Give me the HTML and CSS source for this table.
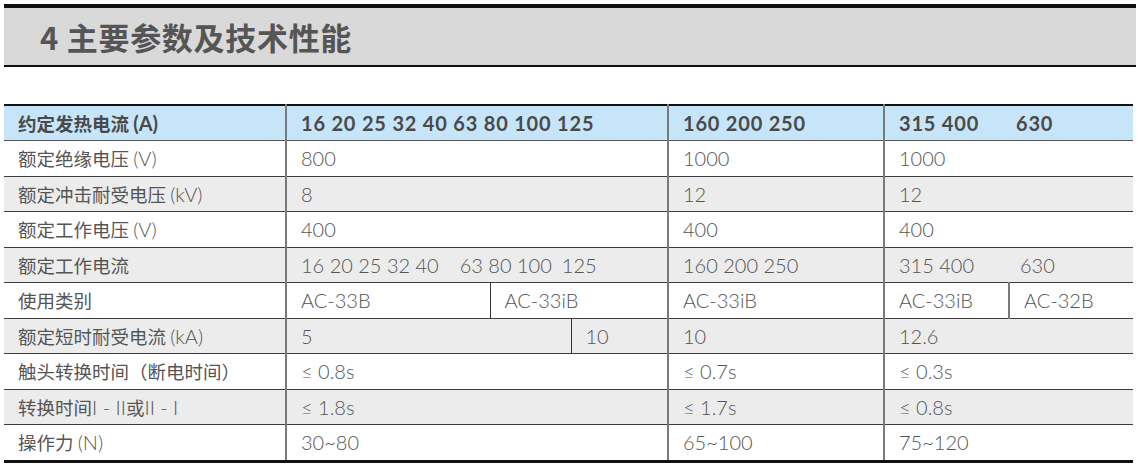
FILE: index.html
```html
<!DOCTYPE html>
<html lang="zh">
<head>
<meta charset="utf-8">
<link rel="stylesheet" href="styles.css">
</head>
<body>
<div class="page">
  <div class="title-bar"><h1 class="title">4 主要参数及技术性能</h1></div>
  <table class="spec">
    <colgroup>
      <col class="c-label"><col class="c-a"><col class="c-b"><col class="c-c"><col class="c-d"><col class="c-e"><col class="c-f">
    </colgroup>
    <thead>
      <tr class="head">
        <th class="label">约定发热电流 <span class="lat">(A)</span></th>
        <th colspan="3" class="main">16 20 25 32 40 63 80 100 125</th>
        <th class="main">160 200 250</th>
        <th class="main">315 400</th>
        <th class="sub-n">630</th>
      </tr>
    </thead>
    <tbody>
      <tr class="w">
        <td class="label">额定绝缘电压 <span class="lat">(V)</span></td>
        <td colspan="3" class="main">800</td>
        <td class="main">1000</td>
        <td colspan="2" class="main">1000</td>
      </tr>
      <tr class="g">
        <td class="label">额定冲击耐受电压 <span class="lat">(kV)</span></td>
        <td colspan="3" class="main">8</td>
        <td class="main">12</td>
        <td colspan="2" class="main">12</td>
      </tr>
      <tr class="w">
        <td class="label">额定工作电压 <span class="lat">(V)</span></td>
        <td colspan="3" class="main">400</td>
        <td class="main">400</td>
        <td colspan="2" class="main">400</td>
      </tr>
      <tr class="g">
        <td class="label">额定工作电流</td>
        <td colspan="3" class="main"><span class="grp">16 20 25 32 40</span><span class="grp gap-a">63 80 100</span><span class="grp gap-b">125</span></td>
        <td class="main">160 200 250</td>
        <td class="main">315 400</td>
        <td class="sub-n">630</td>
      </tr>
      <tr class="w">
        <td class="label">使用类别</td>
        <td class="main">AC-33B</td>
        <td colspan="2" class="split">AC-33iB</td>
        <td class="main">AC-33iB</td>
        <td class="main">AC-33iB</td>
        <td class="split-g">AC-32B</td>
      </tr>
      <tr class="g">
        <td class="label">额定短时耐受电流 <span class="lat">(kA)</span></td>
        <td colspan="2" class="main">5</td>
        <td class="split">10</td>
        <td class="main">10</td>
        <td colspan="2" class="main">12.6</td>
      </tr>
      <tr class="w">
        <td class="label">触头转换时间（断电时间）</td>
        <td colspan="3" class="main">≤ 0.8s</td>
        <td class="main">≤ 0.7s</td>
        <td colspan="2" class="main">≤ 0.3s</td>
      </tr>
      <tr class="g">
        <td class="label">转换时间<span class="lat">I - II</span>或<span class="lat">II - I</span></td>
        <td colspan="3" class="main">≤ 1.8s</td>
        <td class="main">≤ 1.7s</td>
        <td colspan="2" class="main">≤ 0.8s</td>
      </tr>
      <tr class="w last">
        <td class="label">操作力 <span class="lat">(N)</span></td>
        <td colspan="3" class="main">30~80</td>
        <td class="main">65~100</td>
        <td colspan="2" class="main">75~120</td>
      </tr>
    </tbody>
  </table>
</div>
</body>
</html>
```

FILE: styles.css
```css
html, body {
  margin: 0;
  padding: 0;
  background: #ffffff;
}

.page {
  padding: 4px 1px 0 4px;
  font-family: "Lato", "Noto Sans CJK SC", sans-serif;
}

.title-bar {
  background: #d9d9d9;
  border-top: 4px solid #111111;
  border-bottom: 2px solid #111111;
  height: 57px;
  display: flex;
  align-items: center;
  padding-left: 36px;
}

.title {
  margin: 0;
  font-family: "Noto Sans CJK SC", sans-serif;
  font-weight: 700;
  font-size: 31px;
  color: #555555;
  letter-spacing: 0.7px;
}

.spec {
  margin-top: 37px;
  width: 1129px;
  border-collapse: collapse;
  table-layout: fixed;
  border-top: 2px solid #111111;
  border-bottom: 3px solid #111111;
  font-size: 20px;
  color: #555555;
}

.c-label { width: 282px; }
.c-a { width: 204px; }
.c-b { width: 81px; }
.c-c { width: 97px; }
.c-d { width: 216px; }
.c-e { width: 125px; }
.c-f { width: 124px; }

.spec th,
.spec td {
  padding: 0 0 0 14px;
  text-align: left;
  white-space: nowrap;
  height: 34.5px;
  border-bottom: 1px solid #3c3c3c;
  font-weight: 300;
}

.spec .head th {
  background: #c6e5f8;
  font-weight: 700;
  color: #4a4a4a;
  height: 34px;
  border-bottom: 1px solid #555555;
  letter-spacing: 0.8px;
}

.spec .g td { background: #ececec; }
.spec .w td { background: #ffffff; }
.spec .last td { border-bottom: none; }

.spec .main {
  border-left: 2px solid #7a7a7a;
}

.spec .label {
  font-family: "Noto Sans CJK SC", sans-serif;
  font-size: 18.5px;
  font-weight: 400;
}

.spec .head .label {
  font-weight: 700;
  letter-spacing: 0;
}

.spec .lat {
  font-family: "Lato", sans-serif;
  font-size: 20px;
  font-weight: 300;
}

.spec .head .lat {
  font-weight: 700;
}

.spec .split {
  border-left: 1px solid #333333;
}

.spec .split-g {
  border-left: 2px solid #7a7a7a;
}

.spec .sub-n {
  padding-left: 11px;
}

.spec .head .sub-n {
  padding-left: 7px;
}

.spec .gap-a {
  margin-left: 21px;
}

.spec .gap-b {
  margin-left: 10px;
}
```
